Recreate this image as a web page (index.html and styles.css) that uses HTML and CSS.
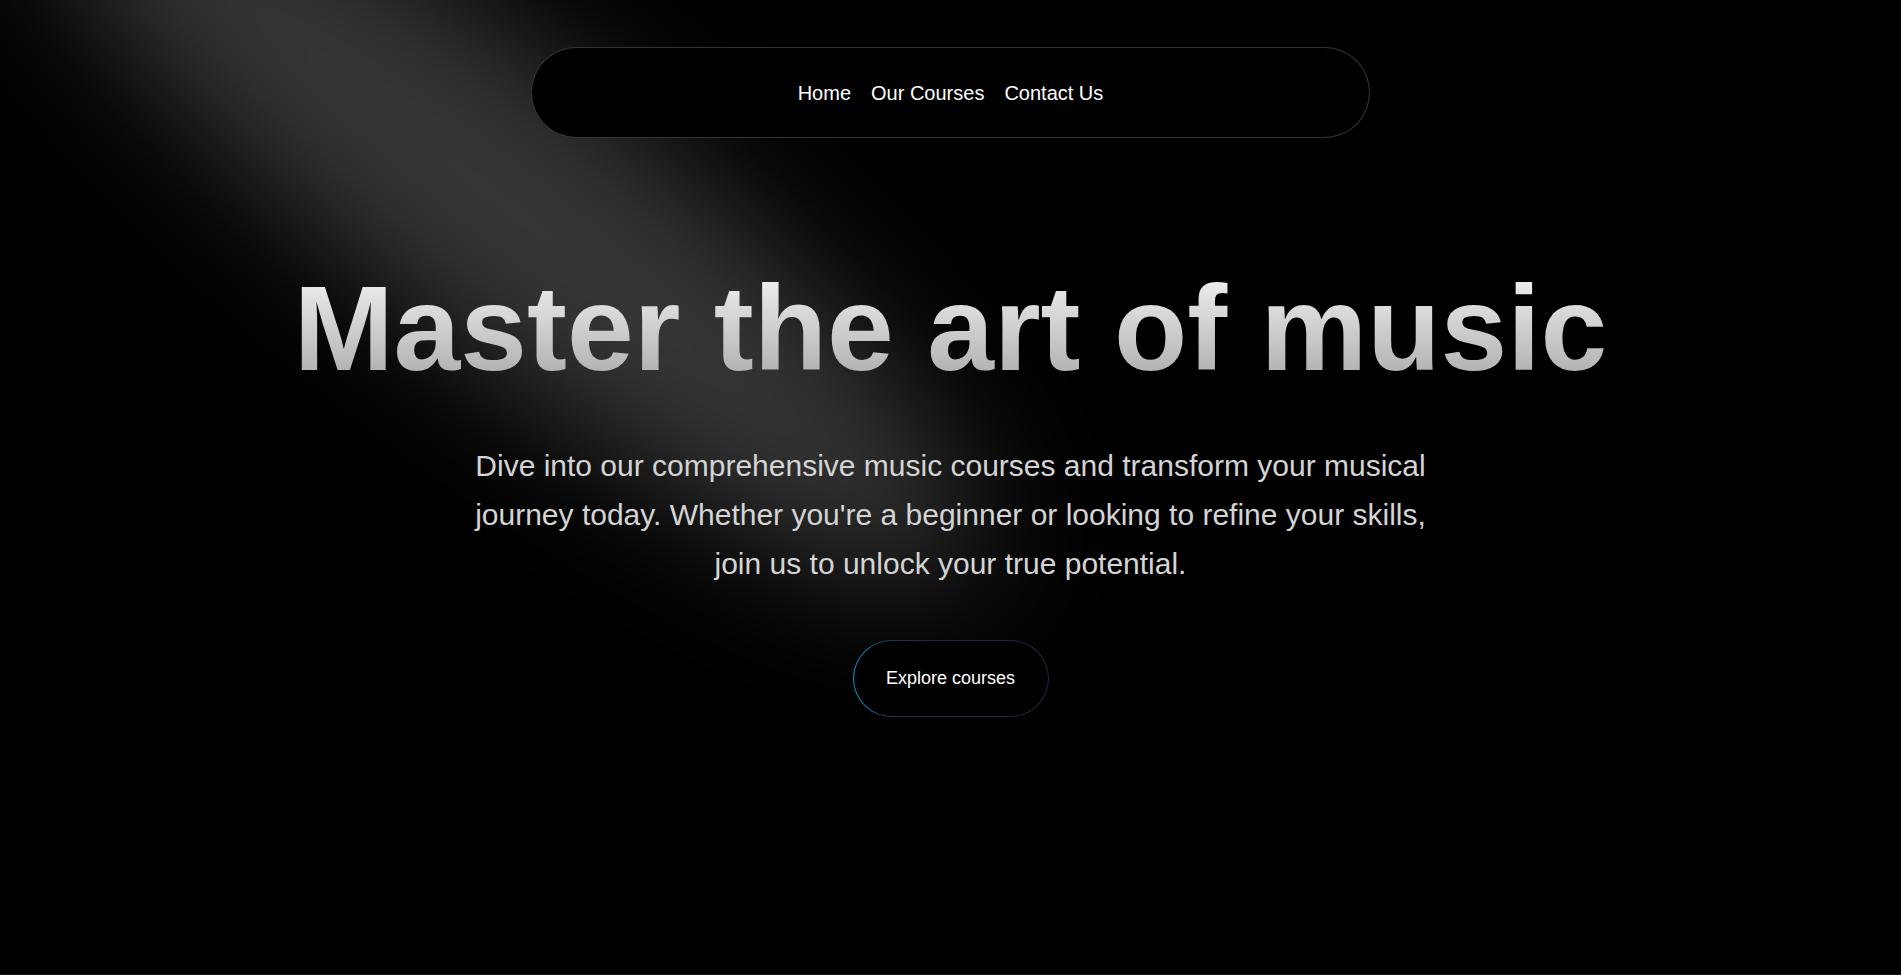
FILE: index.html
```html
<!DOCTYPE html>
<html lang="en">
<head>
<meta charset="utf-8">
<title>Master the art of music</title>
<link rel="stylesheet" href="styles.css">
</head>
<body>
<div class="page">
  <svg class="spotlight" width="1901" height="975" viewBox="0 0 1901 975" fill="none" aria-hidden="true">
    <defs>
      <filter id="spot-blur" x="-1200" y="-1200" width="4400" height="3600" filterUnits="userSpaceOnUse" color-interpolation-filters="sRGB">
        <feGaussianBlur stdDeviation="68"/>
      </filter>
    </defs>
    <g filter="url(#spot-blur)">
      <ellipse cx="500" cy="200" rx="600" ry="140" transform="rotate(38 500 200)" fill="white" fill-opacity="0.21"/>
    </g>
  </svg>

  <header class="nav-wrap">
    <nav class="nav">
      <a class="nav-link" href="#">Home</a>
      <a class="nav-link" href="#">Our Courses</a>
      <a class="nav-link" href="#">Contact Us</a>
    </nav>
  </header>

  <main class="hero">
    <h1 class="hero-title">Master the art of music</h1>
    <p class="hero-text">Dive into our comprehensive music courses and transform your musical journey today. Whether you're a beginner or looking to refine your skills, join us to unlock your true potential.</p>
    <a class="btn" href="#">Explore courses</a>
  </main>
</div>
</body>
</html>
```

FILE: styles.css
```css
* {
  box-sizing: border-box;
}

html, body {
  margin: 0;
  padding: 0;
  background: #000;
}

body {
  font-family: "Liberation Sans", Arial, sans-serif;
  color: #fff;
}

.page {
  position: relative;
  height: 975px;
  overflow: hidden;
  background: #000;
  border-bottom: 1px solid #1c1c1c;
}

.spotlight {
  position: absolute;
  top: 0;
  left: 0;
  z-index: 0;
  pointer-events: none;
}

.nav-wrap {
  position: relative;
  z-index: 1;
  padding-top: 47px;
  display: flex;
  justify-content: center;
}

.nav {
  width: 839px;
  height: 91px;
  border: 1px solid rgba(255, 255, 255, 0.2);
  border-radius: 9999px;
  background: #000;
  display: flex;
  align-items: center;
  justify-content: center;
  gap: 20px;
}

.nav-link {
  color: #fff;
  text-decoration: none;
  font-size: 20px;
  line-height: 24px;
}

.hero {
  position: relative;
  z-index: 1;
  display: flex;
  flex-direction: column;
  align-items: center;
  padding-top: 121px;
}

.hero-title {
  margin: 0;
  font-size: 120px;
  line-height: 138px;
  font-weight: 700;
  text-align: center;
  background: linear-gradient(to bottom, #fafafa, #a3a3a3);
  -webkit-background-clip: text;
  background-clip: text;
  color: transparent;
}

.hero-text {
  margin: 45px 0 0;
  max-width: 970px;
  font-size: 30px;
  line-height: 48.75px;
  text-align: center;
  color: #d4d4d4;
}

.btn {
  margin-top: 52px;
  width: 196px;
  height: 77px;
  display: flex;
  align-items: center;
  justify-content: center;
  border: 1px solid transparent;
  border-radius: 9999px;
  background:
    linear-gradient(#000, #000) padding-box,
    linear-gradient(to right, #0b8fd6 0%, #1d3b57 18%, #1e293b 40%, #1e293b 100%) border-box;
  color: #fff;
  font-size: 18px;
  text-decoration: none;
}
```
